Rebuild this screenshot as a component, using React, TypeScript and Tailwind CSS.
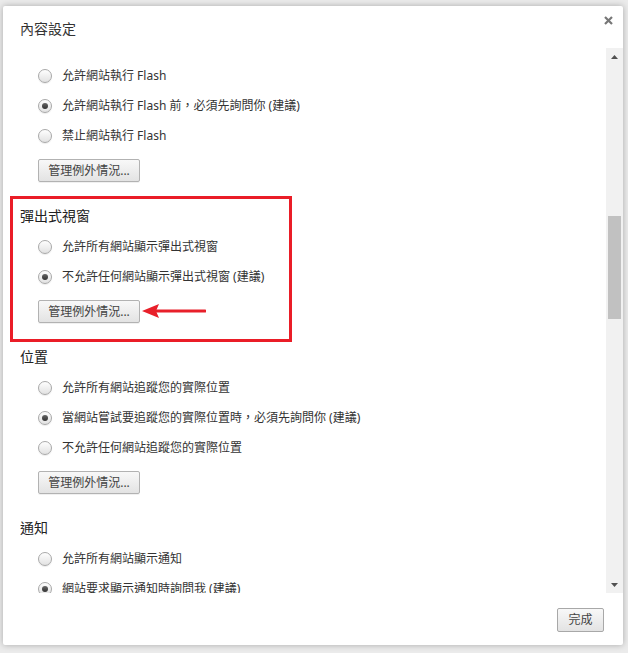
const font = "font-['Noto_Sans','Noto_Sans_CJK_TC',sans-serif]"

function Radio({ checked }: { checked?: boolean }) {
  return (
    <span className="flex h-[14px] w-[14px] shrink-0 items-center justify-center rounded-full border border-[#a9a9a9] bg-linear-to-b from-[#fefefe] to-[#e2e2e2] shadow-[0_1px_1px_rgba(0,0,0,0.08)]">
      {checked && <span className="h-[6px] w-[6px] rounded-full bg-linear-to-b from-[#666] to-[#333]" />}
    </span>
  )
}

function Row({ label, checked }: { label: string; checked?: boolean }) {
  return (
    <div className="flex h-[30px] items-center gap-[10px] pl-[18px] text-[12px] whitespace-nowrap text-[#333]">
      <Radio checked={checked} />
      <span>{label}</span>
    </div>
  )
}

function ManageButton() {
  return (
    <button className="mt-[8px] ml-[18px] flex h-[23px] w-[102px] items-center justify-center rounded-[2px] border border-[#b2b2b2] bg-linear-to-b from-[#f8f8f8] to-[#e3e3e3] text-[12px] text-[#444] shadow-[0_1px_0_rgba(0,0,0,0.06)]">
      管理例外情況...
    </button>
  )
}

function Heading({ children }: { children: string }) {
  return <div className="mt-[23px] h-[20px] text-[14px] leading-[22px] text-[#222]">{children}</div>
}

export default function App() {
  return (
    <div className={`${font} h-[653px] w-[628px] overflow-hidden bg-[#ebebeb] pt-[6px] pl-[3px]`}>
      <div className="flex h-[639px] w-[620px] flex-col rounded-[2px] bg-white shadow-[0_0_6px_rgba(0,0,0,0.28)]">
        {/* header */}
        <div className="relative h-[42px] shrink-0 pt-[13px] pl-[17px]">
          <div className="h-[20px] text-[14px] leading-[20px] text-[#333]">內容設定</div>
          <svg className="absolute top-[10px] right-[10px]" width="9" height="9" viewBox="0 0 9 9">
            <path d="M1 1 L8 8 M8 1 L1 8" stroke="#777" strokeWidth="2.2" />
          </svg>
        </div>

        {/* body */}
        <div className="flex h-[545px] shrink-0">
          <div className="flex-1 overflow-hidden pt-[13px] pl-[17px]">
            <Row label="允許網站執行 Flash" />
            <Row label="允許網站執行 Flash 前，必須先詢問你 (建議)" checked />
            <Row label="禁止網站執行 Flash" />
            <ManageButton />

            <div className="relative">
              <Heading>彈出式視窗</Heading>
              <div className="mt-[7px]">
                <Row label="允許所有網站顯示彈出式視窗" />
                <Row label="不允許任何網站顯示彈出式視窗 (建議)" checked />
              </div>
              <ManageButton />
              {/* annotation */}
              <div className="pointer-events-none absolute top-[-9px] left-[-10px] h-[146px] w-[282px] border-[3px] border-[#ea1d27]" />
              <svg className="absolute top-[98px] left-[122px]" width="64" height="16" viewBox="0 0 64 16">
                <path d="M14 8 L63 8" stroke="#e8202a" strokeWidth="3" strokeLinecap="round" />
                <path d="M0 8 L17 1 L14 8 L17 15 Z" fill="#e8202a" />
              </svg>
            </div>

            <Heading>位置</Heading>
            <div className="mt-[7px]">
              <Row label="允許所有網站追蹤您的實際位置" />
              <Row label="當網站嘗試要追蹤您的實際位置時，必須先詢問你 (建議)" checked />
              <Row label="不允許任何網站追蹤您的實際位置" />
            </div>
            <ManageButton />

            <Heading>通知</Heading>
            <div className="mt-[7px]">
              <Row label="允許所有網站顯示通知" />
              <Row label="網站要求顯示通知時詢問我 (建議)" checked />
            </div>
          </div>

          {/* scrollbar */}
          <div className="flex w-[17px] flex-col bg-[#f1f1f1]">
            <div className="flex h-[17px] items-center justify-center">
              <svg width="7" height="4" viewBox="0 0 7 4">
                <path d="M0 4 L3.5 0 L7 4 Z" fill="#505050" />
              </svg>
            </div>
            <div className="h-[151px]" />
            <div className="mx-[2px] h-[103px] bg-[#c1c1c1]" />
            <div className="flex-1" />
            <div className="flex h-[17px] items-center justify-center">
              <svg width="7" height="4" viewBox="0 0 7 4">
                <path d="M0 0 L7 0 L3.5 4 Z" fill="#505050" />
              </svg>
            </div>
          </div>
        </div>

        {/* footer */}
        <div className="flex flex-1 justify-end pt-[15px] pr-[19px]">
          <button className="flex h-[24px] w-[47px] items-center justify-center rounded-[2px] border border-[#a8a8a8] bg-linear-to-b from-[#f8f8f8] to-[#e3e3e3] text-[12px] text-[#444]">
            完成
          </button>
        </div>
      </div>
    </div>
  )
}
